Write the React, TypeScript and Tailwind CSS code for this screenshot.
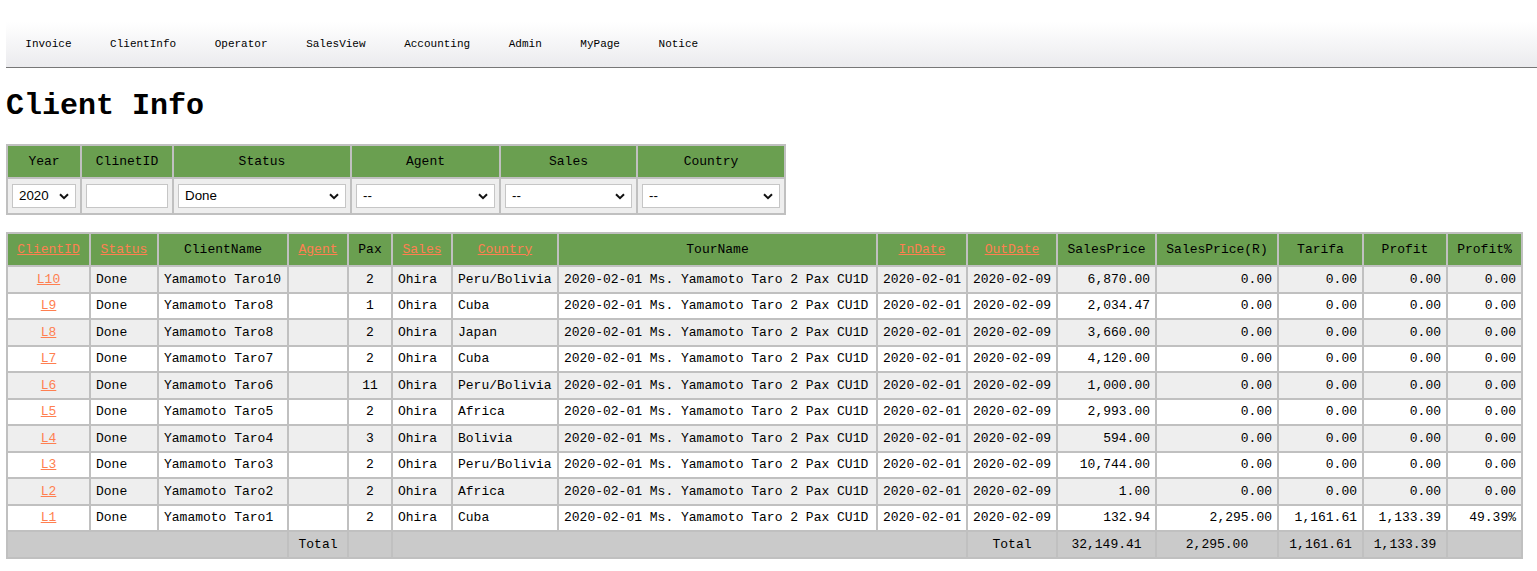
import React from 'react';

const MONO = { fontFamily: '"Liberation Mono", "Courier New", monospace' };

const navItems = ['Invoice', 'ClientInfo', 'Operator', 'SalesView', 'Accounting', 'Admin', 'MyPage', 'Notice'];

type Row = {
  id: string;
  name: string;
  pax: number;
  country: string;
  price: string;
  priceR: string;
  tarifa: string;
  profit: string;
  pct: string;
};

const rows: Row[] = [
  { id: 'L10', name: 'Yamamoto Taro10', pax: 2, country: 'Peru/Bolivia', price: '6,870.00', priceR: '0.00', tarifa: '0.00', profit: '0.00', pct: '0.00' },
  { id: 'L9', name: 'Yamamoto Taro8', pax: 1, country: 'Cuba', price: '2,034.47', priceR: '0.00', tarifa: '0.00', profit: '0.00', pct: '0.00' },
  { id: 'L8', name: 'Yamamoto Taro8', pax: 2, country: 'Japan', price: '3,660.00', priceR: '0.00', tarifa: '0.00', profit: '0.00', pct: '0.00' },
  { id: 'L7', name: 'Yamamoto Taro7', pax: 2, country: 'Cuba', price: '4,120.00', priceR: '0.00', tarifa: '0.00', profit: '0.00', pct: '0.00' },
  { id: 'L6', name: 'Yamamoto Taro6', pax: 11, country: 'Peru/Bolivia', price: '1,000.00', priceR: '0.00', tarifa: '0.00', profit: '0.00', pct: '0.00' },
  { id: 'L5', name: 'Yamamoto Taro5', pax: 2, country: 'Africa', price: '2,993.00', priceR: '0.00', tarifa: '0.00', profit: '0.00', pct: '0.00' },
  { id: 'L4', name: 'Yamamoto Taro4', pax: 3, country: 'Bolivia', price: '594.00', priceR: '0.00', tarifa: '0.00', profit: '0.00', pct: '0.00' },
  { id: 'L3', name: 'Yamamoto Taro3', pax: 2, country: 'Peru/Bolivia', price: '10,744.00', priceR: '0.00', tarifa: '0.00', profit: '0.00', pct: '0.00' },
  { id: 'L2', name: 'Yamamoto Taro2', pax: 2, country: 'Africa', price: '1.00', priceR: '0.00', tarifa: '0.00', profit: '0.00', pct: '0.00' },
  { id: 'L1', name: 'Yamamoto Taro1', pax: 2, country: 'Cuba', price: '132.94', priceR: '2,295.00', tarifa: '1,161.61', profit: '1,133.39', pct: '49.39%' },
];

// main table columns: label, width, sortable link?
const columns: { label: string; w: number; link: boolean }[] = [
  { label: 'ClientID', w: 83, link: true },
  { label: 'Status', w: 68, link: true },
  { label: 'ClientName', w: 130, link: false },
  { label: 'Agent', w: 60, link: true },
  { label: 'Pax', w: 44, link: false },
  { label: 'Sales', w: 60, link: true },
  { label: 'Country', w: 106, link: true },
  { label: 'TourName', w: 319, link: false },
  { label: 'InDate', w: 90, link: true },
  { label: 'OutDate', w: 90, link: true },
  { label: 'SalesPrice', w: 99, link: false },
  { label: 'SalesPrice(R)', w: 122, link: false },
  { label: 'Tarifa', w: 85, link: false },
  { label: 'Profit', w: 84, link: false },
  { label: 'Profit%', w: 75, link: false },
];

const sans = { fontFamily: '"Liberation Sans", Arial, sans-serif' };

function Select({ value, options }: { value: string; options: string[] }) {
  return (
    <div className="relative">
      <select
        className="w-full h-[24px] appearance-none border border-[#c6c6c6] bg-white pl-[6px] pr-[22px] text-[13.33px] text-black outline-none"
        style={sans}
        defaultValue={value}
      >
        {options.map((o) => (
          <option key={o}>{o}</option>
        ))}
      </select>
      <svg
        className="pointer-events-none absolute right-[7px] top-[9px] w-[10px] h-[7px]"
        viewBox="0 0 10 7"
        fill="none"
        stroke="#111"
        strokeWidth="2"
      >
        <path d="M1 1.2 5 5.2 9 1.2" />
      </svg>
    </div>
  );
}

function FilterBar() {
  const th = 'border-2 border-[#c0c0c0] bg-[#6a9f50] h-[33px] font-normal text-[13px] text-black';
  const td = 'border-2 border-[#c0c0c0] bg-[#eeeeee] px-[4px] h-[36px]';
  return (
    <table className="table-fixed border-collapse w-[778px]" style={MONO}>
      <colgroup>
        <col className="w-[74px]" />
        <col className="w-[92px]" />
        <col className="w-[178px]" />
        <col className="w-[149px]" />
        <col className="w-[137px]" />
        <col className="w-[148px]" />
      </colgroup>
      <thead>
        <tr>
          {['Year', 'ClinetID', 'Status', 'Agent', 'Sales', 'Country'].map((h) => (
            <th key={h} className={th}>
              {h}
            </th>
          ))}
        </tr>
      </thead>
      <tbody>
        <tr>
          <td className={td}>
            <Select value="2020" options={['2020', '2019']} />
          </td>
          <td className={td}>
            <input className="w-full h-[24px] border border-[#c6c6c6] bg-white px-[4px] text-[13px]" style={sans} />
          </td>
          <td className={td}>
            <Select value="Done" options={['Done', '--']} />
          </td>
          {['agent', 'sales', 'country'].map((k) => (
            <td key={k} className={td}>
              <Select value="--" options={['--']} />
            </td>
          ))}
        </tr>
      </tbody>
    </table>
  );
}

function ClientTable() {
  const cell = 'border-2 border-[#c0c0c0] px-[5px] h-[26.5px] leading-[15px] whitespace-nowrap';
  const link = 'text-[#ff7f50] underline';
  return (
    <table className="table-fixed border-collapse w-[1515px] text-[13px] text-black" style={MONO}>
      <colgroup>
        {columns.map((c) => (
          <col key={c.label} style={{ width: c.w }} />
        ))}
      </colgroup>
      <thead>
        <tr>
          {columns.map((c) => (
            <th key={c.label} className="border-2 border-[#c0c0c0] bg-[#6a9f50] h-[33px] font-normal whitespace-nowrap">
              {c.link ? <a href="#" className={link}>{c.label}</a> : c.label}
            </th>
          ))}
        </tr>
      </thead>
      <tbody>
        {rows.map((r, i) => (
          <tr key={r.id} className={i % 2 === 0 ? 'bg-[#eeeeee]' : 'bg-white'}>
            <td className={`${cell} text-center`}>
              <a href="#" className={link}>{r.id}</a>
            </td>
            <td className={cell}>Done</td>
            <td className={cell}>{r.name}</td>
            <td className={cell}></td>
            <td className={`${cell} text-center`}>{r.pax}</td>
            <td className={cell}>Ohira</td>
            <td className={cell}>{r.country}</td>
            <td className={cell}>2020-02-01 Ms. Yamamoto Taro 2 Pax CU1D</td>
            <td className={cell}>2020-02-01</td>
            <td className={cell}>2020-02-09</td>
            <td className={`${cell} text-right`}>{r.price}</td>
            <td className={`${cell} text-right`}>{r.priceR}</td>
            <td className={`${cell} text-right`}>{r.tarifa}</td>
            <td className={`${cell} text-right`}>{r.profit}</td>
            <td className={`${cell} text-right`}>{r.pct}</td>
          </tr>
        ))}
      </tbody>
      <tfoot>
        <tr className="bg-[#cacaca] text-center">
          <td className={cell} colSpan={3}></td>
          <td className={cell}>Total</td>
          <td className={cell}></td>
          <td className={cell} colSpan={4}></td>
          <td className={cell}>Total</td>
          <td className={cell}>32,149.41</td>
          <td className={cell}>2,295.00</td>
          <td className={cell}>1,161.61</td>
          <td className={cell}>1,133.39</td>
          <td className={cell}></td>
        </tr>
      </tfoot>
    </table>
  );
}

export default function App() {
  return (
    <div className="min-h-screen bg-white pl-[6px] pt-[22px] text-black" style={MONO}>
      {/* top menu */}
      <nav className="h-[46px] border-b border-[#777777] bg-gradient-to-b from-white to-[#ebebee] flex items-center">
        {navItems.map((n) => (
          <a key={n} href="#" className="px-[19.3px] text-[11px] text-black">
            {n}
          </a>
        ))}
      </nav>

      <h1 className="mt-[21px] mb-[21px] text-[30px] leading-[34px] font-bold">Client Info</h1>

      <FilterBar />

      <div className="mt-[17px]">
        <ClientTable />
      </div>
    </div>
  );
}
